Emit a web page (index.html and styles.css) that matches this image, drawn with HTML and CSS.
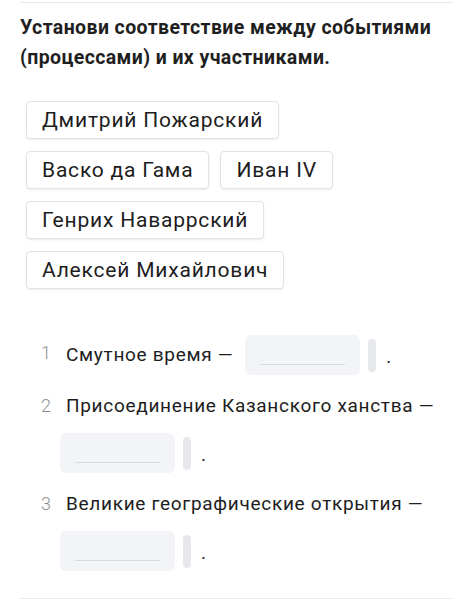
FILE: index.html
```html
<!DOCTYPE html>
<html lang="ru">
<head>
  <meta charset="UTF-8" />
  <meta name="viewport" content="width=device-width, initial-scale=1.0" />
  <title>Соответствие</title>
  <link rel="stylesheet" href="styles.css">
</head>
<body>
  <div class="task">
    <div class="title">Установи соответствие между событиями (процессами) и их участниками.</div>

    <!-- Варианты ответа -->
    <div class="chips">
      <div class="chip">Дмитрий Пожарский</div>
      <div class="chip">Васко да Гама</div>
      <div class="chip">Иван IV</div>
      <div class="chip">Генрих Наваррский</div>
      <div class="chip">Алексей Михайлович</div>
    </div>

    <!-- Пропуски -->
    <ol class="items">
      <li class="item">
        <span class="num">1</span>
        <div class="line">
          <span class="text">Смутное время —</span>
          <span class="slot"><span class="blank"></span><span class="handle"></span><span class="dot">.</span></span>
        </div>
      </li>
      <li class="item">
        <span class="num">2</span>
        <div class="line">
          <span class="text">Присоединение Казанского ханства —</span>
          <span class="slot"><span class="blank"></span><span class="handle"></span><span class="dot">.</span></span>
        </div>
      </li>
      <li class="item">
        <span class="num">3</span>
        <div class="line">
          <span class="text">Великие географические открытия —</span>
          <span class="slot"><span class="blank"></span><span class="handle"></span><span class="dot">.</span></span>
        </div>
      </li>
    </ol>
  </div>
</body>
</html>
```

FILE: styles.css
```css
body {
  margin: 0;
  padding-top: 2px;
  background: #fff;
  font-family: Roboto, "Liberation Sans", sans-serif;
  color: #1d1d1d;
}

.task {
  margin: 0 20px;
  border-top: 1px solid #e9e9e9;
  border-bottom: 1px solid #e9e9e9;
  padding-bottom: 25px;
}

.title {
  font-size: 19.5px;
  font-weight: 700;
  letter-spacing: 0.4px;
  line-height: 30px;
  padding-top: 10px;
  color: #1f1f1f;
}

.chips {
  display: flex;
  flex-wrap: wrap;
  gap: 12px 11px;
  margin-top: 28px;
  padding-left: 6px;
}

.chip {
  height: 38px;
  line-height: 36px;
  box-sizing: border-box;
  padding: 0 15px;
  font-size: 21px;
  letter-spacing: 0.8px;
  border: 1px solid #e3e3e3;
  border-radius: 4px;
  box-shadow: 0 1px 2px rgba(0, 0, 0, 0.08);
  background: #fff;
}

.items {
  list-style: none;
  margin: 44px 0 0;
  padding: 0;
}

.item {
  display: flex;
  align-items: flex-start;
  margin-bottom: 9px;
}

.item:last-child {
  margin-bottom: 0;
}

.num {
  width: 20px;
  margin-left: 16px;
  margin-right: 4px;
  text-align: center;
  line-height: 40px;
  font-size: 18px;
  font-weight: 300;
  color: #8f8f8f;
}

.line {
  flex: 1;
  display: flex;
  flex-wrap: wrap;
  align-items: center;
  gap: 5px 6px;
}

.text {
  padding: 0 6px;
  line-height: 40px;
  font-size: 19px;
  letter-spacing: 0.7px;
}

.slot {
  display: flex;
  align-items: center;
}

.blank {
  position: relative;
  width: 115px;
  height: 40px;
  border-radius: 6px;
  background: #f2f4f8;
}

.blank::after {
  content: "";
  position: absolute;
  left: 15px;
  right: 15px;
  bottom: 10px;
  border-bottom: 1.5px solid #d6dbe3;
}

.handle {
  width: 8px;
  height: 33px;
  margin-left: 8px;
  border-radius: 4px;
  background: #e6e8ec;
}

.dot {
  margin-left: 10px;
  font-size: 19px;
  line-height: 40px;
  padding-top: 4px;
}
```
